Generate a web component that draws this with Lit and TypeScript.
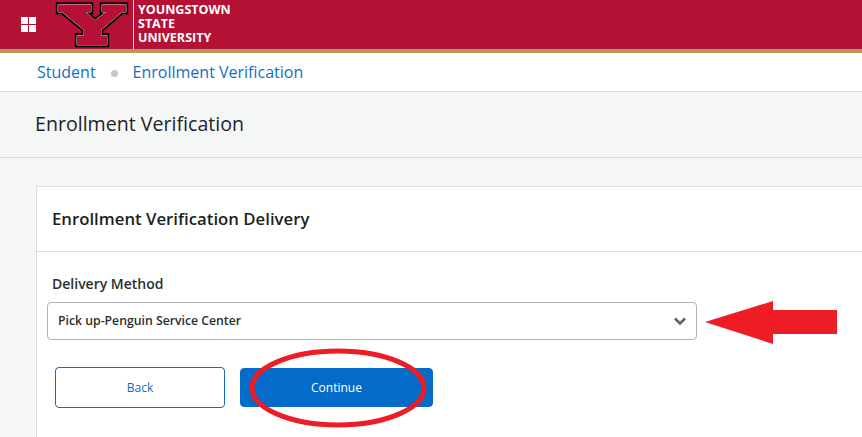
import { LitElement, html, css, svg } from "lit";
import { customElement } from "lit/decorators.js";

const Y_POINTS = "58,4.5 91,4.5 91,12 86,12 95,20.5 106,12 102,12 102,4.5 126,4.5 126,12 122,12 101,30 101,35.5 107,35.5 107,45 77,45 77,35.5 84,35.5 84,30 62,12 58,12";

@customElement("app-root")
export class AppRoot extends LitElement {
  static styles = css`
    :host { display: block; width: 862px; height: 437px; overflow: hidden; position: relative; background: #f5f7f7; font-family: "Open Sans", "Liberation Sans", sans-serif; }
    .top { height: 49px; background: #b51135; border-bottom: 4px solid #b5975a; display: flex; align-items: center; box-sizing: content-box; }
    .grid { display: grid; grid-template-columns: 6.5px 6.5px; grid-auto-rows: 6.5px; gap: 1.5px; margin: 0 0 0 21px; }
    .grid i { background: #fff; display: block; }
    .logo { width: 76px; height: 49px; margin-left: 19.5px; flex: none; margin-right: 2px; }
    .rule { width: 1px; height: 49px; background: #f0d8dc; }
    .uni { margin-left: 4px; color: #fff; font: 700 12.5px/14px "Open Sans", sans-serif; margin-top: -2px; }
    .uni div { white-space: nowrap; }
    .crumbs { height: 38px; background: #fff; border-bottom: 1px solid #dcdede; display: flex; align-items: center; padding-left: 37px; font-size: 16px; color: #0f6fc6; }
    .dot { width: 7px; height: 7px; border-radius: 50%; background: #c4c8c8; margin: 2px 15px 0 15px; }
    .title { height: 65px; border-bottom: 1px solid #dcdede; display: flex; align-items: center; padding-left: 35px; font-size: 19.6px; font-weight: 400; color: #1f2526; }
    .title span { margin-top: -2px; }
    .body { padding: 28px 0 0 36px; }
    .card { background: #fff; border: 1px solid #dcdede; border-right: none; height: 300px; }
    .card h2 { margin: 0; height: 64px; display: flex; align-items: center; padding-left: 15px; font-size: 16.75px; font-weight: 600; color: #1b1f20; border-bottom: 1px solid #dcdede; }
    .card h2 span { margin-top: -2px; }
    .content { padding: 22px 0 0 10px; }
    label { display: block; font-size: 14px; font-weight: 600; color: #2a2f30; line-height: 19px; margin-left: 5px; }
    .select { margin-top: 9px; height: 36px; border: 1px solid #b0b3b3; border-radius: 4px; display: flex; align-items: center; justify-content: space-between; padding: 0 10px; box-sizing: content-box; width: 628px; font-size: 12.25px; font-weight: 600; color: #2a2f30; }
    .select span { margin-top: -2px; }
    .select svg { display: block; margin-right: -1px; }
    .actions { display: flex; gap: 15px; margin: 27px 0 0 8px; align-items: center; }
    .btn { box-sizing: border-box; width: 170px; height: 41px; border-radius: 4px; border: 1px solid #0f6bc4; display: flex; align-items: center; justify-content: center; font-size: 12px; font-weight: 400; color: #0f6bc4; background: #fff; }
    .btn.primary { width: 193px; height: 39px; background: #046bc8; border-color: #046bc8; color: #fff; }
    .overlay { position: absolute; left: 0; top: 0; pointer-events: none; }
  `;

  render() {
    return html`
      <div class="top">
        <div class="grid"><i></i><i></i><i></i><i></i></div>
        <svg class="logo" viewBox="55 0 76 49">
          ${svg`<polygon points=${Y_POINTS} fill="#000" stroke="#000" stroke-width="4.4" stroke-linejoin="miter"/>
          <polygon points=${Y_POINTS} fill="#c4c6c6" stroke="#c4c6c6" stroke-width="1"/>
          <polygon points=${Y_POINTS} fill="#b51135"/>`}
        </svg>
        <div class="rule"></div>
        <div class="uni"><div>YOUNGSTOWN</div><div>STATE</div><div>UNIVERSITY</div></div>
      </div>
      <div class="crumbs"><span>Student</span><span class="dot"></span><span>Enrollment Verification</span></div>
      <div class="title"><span>Enrollment Verification</span></div>
      <div class="body">
        <div class="card">
          <h2><span>Enrollment Verification Delivery</span></h2>
          <div class="content">
            <label>Delivery Method</label>
            <div class="select">
              <span>Pick up-Penguin Service Center</span>
              <svg width="14" height="10" viewBox="0 0 14 10"><path d="M2 2.5 L7 7.5 L12 2.5" fill="none" stroke="#5f6468" stroke-width="2.6"/></svg>
            </div>
            <div class="actions">
              <div class="btn">Back</div>
              <div class="btn primary">Continue</div>
            </div>
          </div>
        </div>
      </div>
      <svg class="overlay" width="862" height="437" viewBox="0 0 862 437">
        <polygon points="705,322 773,301 773,310 837,310 837,334 773,334 773,344" fill="#ee1c25"/>
        <ellipse cx="338" cy="388" rx="86" ry="37" fill="none" stroke="#ee1c25" stroke-width="5"/>
      </svg>
    `;
  }
}
